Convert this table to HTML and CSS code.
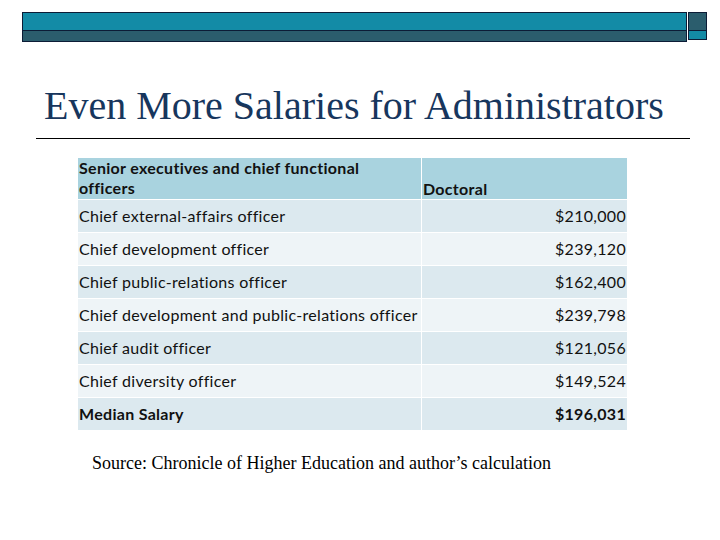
FILE: index.html
```html
<!DOCTYPE html>
<html>
<head>
<meta charset="utf-8">
<link rel="stylesheet" href="styles.css">
</head>
<body>
<div class="slide">
  <div class="bars">
    <div class="bar-main">
      <div class="bar-top"></div>
      <div class="bar-bottom"></div>
    </div>
    <div class="bar-side">
      <div class="side-top"></div>
      <div class="side-bottom"></div>
    </div>
  </div>
  <h1 class="title">Even More Salaries for Administrators</h1>
  <div class="rule"></div>
  <table class="salaries">
    <thead>
      <tr>
        <th class="col-role">Senior executives and chief functional<br>officers</th>
        <th class="col-val">Doctoral</th>
      </tr>
    </thead>
    <tbody>
      <tr class="dark"><td>Chief external-affairs officer</td><td class="num">$210,000</td></tr>
      <tr class="light"><td>Chief development officer</td><td class="num">$239,120</td></tr>
      <tr class="dark"><td>Chief public-relations officer</td><td class="num">$162,400</td></tr>
      <tr class="light"><td>Chief development and public-relations officer</td><td class="num">$239,798</td></tr>
      <tr class="dark"><td>Chief audit officer</td><td class="num">$121,056</td></tr>
      <tr class="light"><td>Chief diversity officer</td><td class="num">$149,524</td></tr>
      <tr class="dark total"><td>Median Salary</td><td class="num">$196,031</td></tr>
    </tbody>
  </table>
  <p class="source">Source: Chronicle of Higher Education and author’s calculation</p>
</div>
</body>
</html>
```

FILE: styles.css
```css
html, body {
  margin: 0;
  padding: 0;
  background: #ffffff;
}

.slide {
  width: 720px;
  height: 540px;
  overflow: hidden;
  padding-top: 12px;
  box-sizing: border-box;
}

.bars {
  display: flex;
  margin-left: 22px;
}

.bar-main {
  width: 665px;
  display: flex;
  flex-direction: column;
  border: 1px solid #0c1c36;
  box-sizing: border-box;
}

.bar-top {
  height: 17px;
  background: #138ba6;
  border-bottom: 1px solid #0c1c36;
}

.bar-bottom {
  height: 10px;
  background: #2b5d6d;
}

.bar-side {
  width: 19px;
  margin-left: 1px;
  display: flex;
  flex-direction: column;
  border: 1px solid #0c1c36;
  box-sizing: border-box;
  height: 28px;
}

.side-top {
  height: 17px;
  background: #2b5d6d;
  border-bottom: 1px solid #0c1c36;
}

.side-bottom {
  flex: 1;
  background: #138ba6;
}

.title {
  margin: 41px 0 0 44px;
  font-family: "Liberation Serif", "Times New Roman", serif;
  font-weight: normal;
  font-size: 40px;
  line-height: 46px;
  color: #17365d;
  white-space: nowrap;
}

.rule {
  margin: 9px 0 0 36px;
  width: 654px;
  height: 1px;
  background: #000000;
}

.salaries {
  margin: 18px 0 0 77px;
  border-collapse: collapse;
  font-family: "Lato", "Open Sans", sans-serif;
  font-size: 16px;
  letter-spacing: 0.3px;
  color: #111111;
}

.salaries th,
.salaries td {
  border: 1px solid #ffffff;
  padding: 0 1px;
}

.salaries th {
  background: #a9d3df;
  font-weight: bold;
  text-align: left;
  height: 41px;
  line-height: 20px;
}

.col-role {
  width: 341px;
  vertical-align: top;
  padding-top: 1px;
}

.col-val {
  width: 203px;
  vertical-align: bottom;
}

.salaries td {
  height: 32px;
  line-height: 18px;
}

.dark td {
  background: #dce9ef;
}

.light td {
  background: #eef4f7;
}

.num {
  text-align: right;
}

.total td {
  font-weight: bold;
}

.source {
  margin: 22px 0 0 92px;
  font-family: "Liberation Serif", "Times New Roman", serif;
  font-size: 18px;
  color: #000000;
}
```
